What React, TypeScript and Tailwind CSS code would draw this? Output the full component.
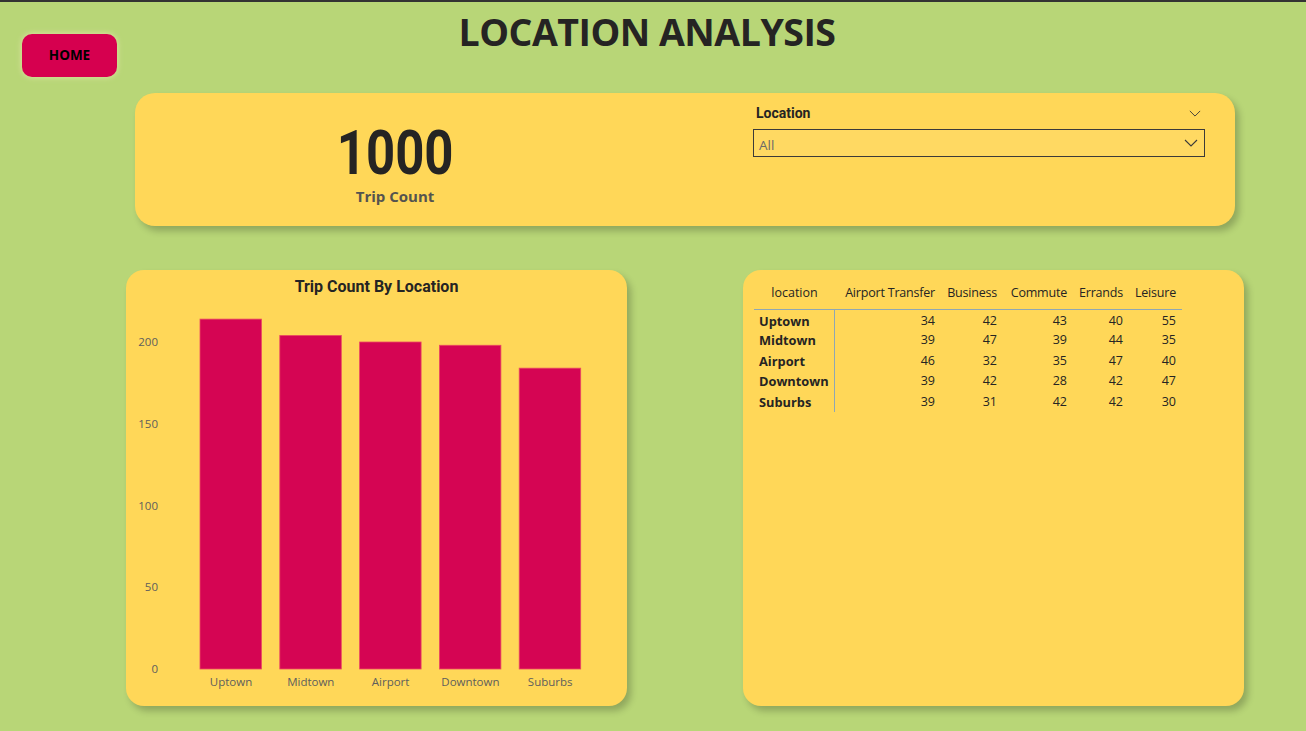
import React from 'react';

const locations = [
  { name: 'Uptown', vals: [34, 42, 43, 40, 55] },
  { name: 'Midtown', vals: [39, 47, 39, 44, 35] },
  { name: 'Airport', vals: [46, 32, 35, 47, 40] },
  { name: 'Downtown', vals: [39, 42, 28, 42, 47] },
  { name: 'Suburbs', vals: [39, 31, 42, 42, 30] },
];

const purposes = ['Airport Transfer', 'Business', 'Commute', 'Errands', 'Leisure'];

const PX_PER_UNIT = 1.635;
const BASE_Y = 359;

function Chevron({ className }: { className?: string }) {
  return (
    <svg className={className} viewBox="0 0 14 8" fill="none">
      <path d="M1 1l6 6 6-6" stroke="#3b3a39" strokeWidth="1.1" />
    </svg>
  );
}

function BarChart() {
  return (
    <svg width="501" height="396" className="block" style={{ fontFamily: '"Open Sans", sans-serif' }}>
      {[0, 50, 100, 150, 200].map((t) => (
        <text key={t} x="32" y={BASE_Y - t * PX_PER_UNIT + 4} textAnchor="end" fontSize="11.5" fill="#605e5c">
          {t}
        </text>
      ))}
      {locations.map((loc, i) => {
        const total = loc.vals.reduce((a, b) => a + b, 0);
        const h = total * PX_PER_UNIT;
        const x = 74 + i * 79.8;
        return (
          <g key={loc.name}>
            <rect x={x} y={BASE_Y - h} width="61.5" height={h} fill="#d50553" stroke="#ea4a62" strokeWidth="0.8" />
            <text x={x + 31} y="376" textAnchor="middle" fontSize="11.5" fill="#605e5c">
              {loc.name}
            </text>
          </g>
        );
      })}
    </svg>
  );
}

export default function App() {
  return (
    <div className="w-[1306px] h-[731px] overflow-hidden bg-[#b8d677] border-t-2 border-[#333333] font-['Open_Sans',sans-serif] text-[#252423]">
      {/* Header */}
      <div className="grid grid-cols-[1fr_auto_1fr] h-[91px]">
        <div>
          <div className="ml-[22px] mt-[32px] w-[95px] h-[43px] rounded-[10px] bg-[#d6004f] flex items-center justify-center text-[13.5px] font-bold text-black shadow-[0_0_6px_rgba(255,240,200,0.6)]">
            HOME
          </div>
        </div>
        <h1 className="mt-[7px] mr-[12px] text-[37.5px] leading-[46px] font-bold tracking-[-0.5px] text-[#252423]">
          LOCATION ANALYSIS
        </h1>
        <div />
      </div>

      {/* KPI + slicer */}
      <div className="ml-[135px] w-[1100px] h-[133px] rounded-[20px] bg-[#ffd758] shadow-[4px_5px_7px_rgba(0,0,0,0.22)] flex">
        <div className="w-[520px] flex flex-col items-center pt-[32px]">
          <div className="font-['Roboto',sans-serif] font-bold text-[62px] leading-[56px] scale-x-[0.82] text-[#252423]">
            1000
          </div>
          <div className="mt-[5px] text-[15px] leading-[20px] font-bold text-[#54534f]">Trip Count</div>
        </div>
        <div className="ml-[98px] w-[452px] pt-[10px]">
          <div className="h-[20px] flex items-center justify-between pl-[3px] pr-[4px]">
            <span className="font-['Roboto',sans-serif] font-bold text-[14px] text-[#252423]">Location</span>
            <Chevron className="w-[12px] h-[7px]" />
          </div>
          <div className="mt-[6px] h-[28px] border border-[#3b3a39] bg-[#ffd962] flex items-center justify-between pl-[5px] pr-[6px]">
            <span className="pt-[3px] text-[13.5px] leading-[18px] text-[#6b6a68]">All</span>
            <Chevron className="w-[14px] h-[8px]" />
          </div>
        </div>
      </div>

      {/* Bottom cards */}
      <div className="ml-[126px] mt-[44px] flex gap-[116px]">
        <div className="w-[501px] h-[436px] rounded-[18px] bg-[#ffd758] shadow-[4px_5px_7px_rgba(0,0,0,0.22)] overflow-hidden">
          <div className="h-[40px] pt-[7px] text-center font-['Roboto',sans-serif] font-bold text-[16px] leading-[20px] text-[#252423]">
            Trip Count By Location
          </div>
          <BarChart />
        </div>

        <div className="w-[501px] h-[436px] rounded-[18px] bg-[#ffd758] shadow-[4px_5px_7px_rgba(0,0,0,0.22)]">
          <div className="ml-[11px] mt-[12px] grid grid-cols-[81px_106px_62px_70px_56px_53px] w-fit text-[12.5px] text-[#252423]">
            <div className="leading-[22px] pb-[5px] text-center border-b border-[#8fa7b3]">location</div>
            {purposes.map((p) => (
              <div key={p} className="leading-[22px] pb-[5px] text-right pr-[6px] whitespace-nowrap tracking-[-0.2px] border-b border-[#8fa7b3]">
                {p}
              </div>
            ))}
            {locations.map((loc, i) => (
              <React.Fragment key={loc.name}>
                <div className={`h-[20.4px] leading-[20.4px] pl-[5px] font-bold text-[12.8px] border-r border-[#8fa7b3] ${i === 0 ? 'pt-[1px]' : ''}`}>
                  {loc.name}
                </div>
                {loc.vals.map((v, j) => (
                  <div key={j} className={`h-[20.4px] leading-[20.4px] text-right pr-[6px] ${i === 0 ? 'pt-[1px]' : ''}`}>
                    {v}
                  </div>
                ))}
              </React.Fragment>
            ))}
          </div>
        </div>
      </div>
    </div>
  );
}
